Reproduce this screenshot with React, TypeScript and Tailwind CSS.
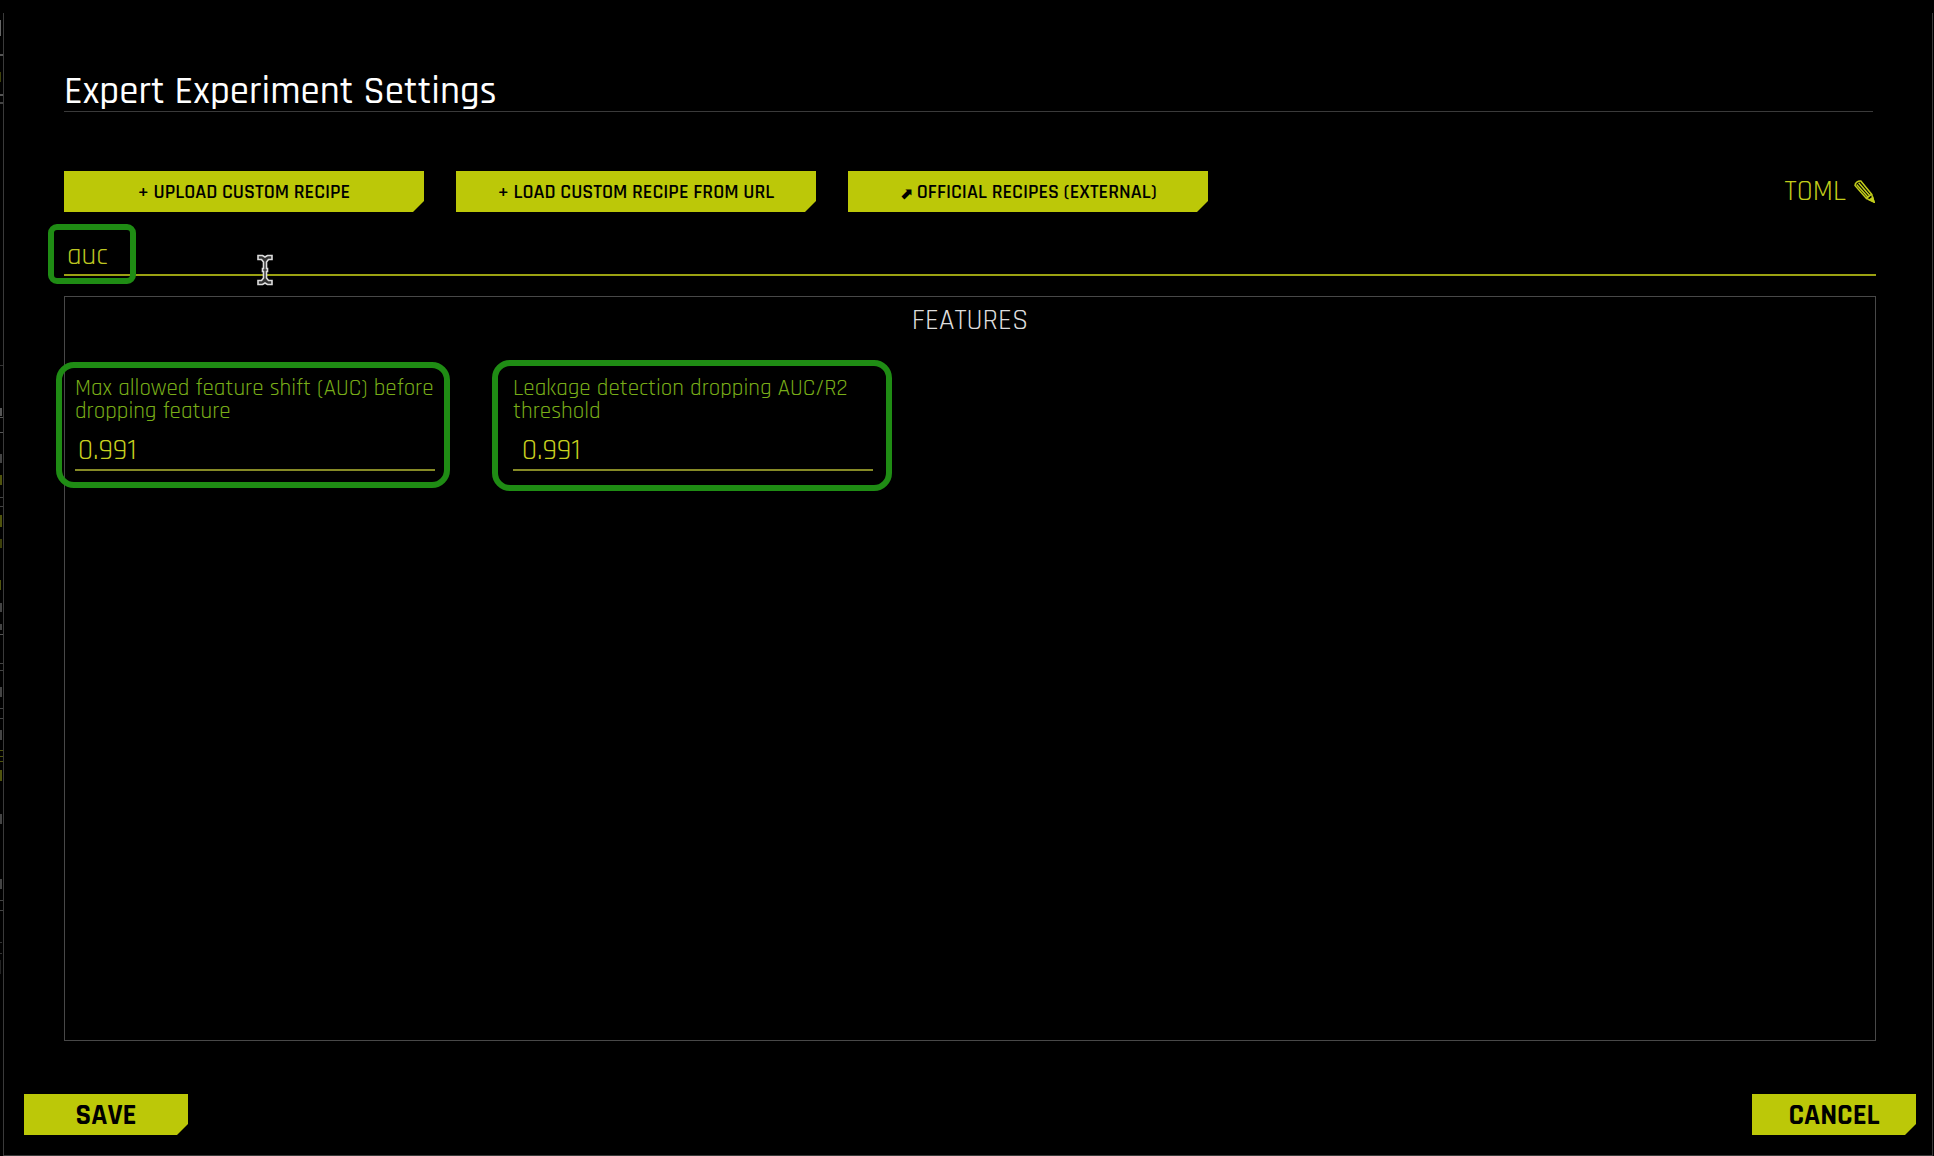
import type { ReactNode } from "react";

const FONT = "font-['Rajdhani','Roboto_Condensed',sans-serif]";
const NOTCH = "[clip-path:polygon(0_0,100%_0,100%_calc(100%-11px),calc(100%-11px)_100%,0_100%)]";

function RecipeButton({ children }: { children: ReactNode }) {
  return (
    <button
      type="button"
      className={`flex h-[41px] w-[360px] items-center justify-center gap-1 bg-[#bcc808] text-[20px] leading-6 font-semibold text-black ${NOTCH}`}
    >
      {children}
    </button>
  );
}

function FooterButton({ children }: { children: ReactNode }) {
  return (
    <button
      type="button"
      className={`flex h-[41px] w-[164px] items-center justify-center bg-[#bcc808] pt-0.5 text-[29px] leading-8 font-bold text-black ${NOTCH}`}
    >
      {children}
    </button>
  );
}

function PencilIcon() {
  return (
    <svg aria-hidden="true" width="21" height="23" viewBox="0 0 21 23" fill="none" stroke="currentColor" strokeWidth="1.5">
      <path d="M1 5.5C1 3 4 .6 6.8 1L17.6 14.2 12.4 18.4Z" />
      <path d="M2.6 4.4 14 17.2M4.6 2.8 15.8 15.8" />
      <path d="M17.6 14.2 20 22 12.4 18.4" />
      <path d="M18.7 17.4 20 22 15.4 19.9Z" fill="currentColor" />
    </svg>
  );
}

function Setting({ id, label, inset }: { id: string; label: string; inset: string }) {
  return (
    <div className="flex w-[360px] flex-col">
      <label htmlFor={id} className="text-[23px] leading-[23px] text-[#78ad18]">
        {label}
      </label>
      <input
        id={id}
        type="text"
        defaultValue="0.991"
        className={`mt-[9px] h-[39px] w-full border-b-2 border-[#868a26] bg-transparent text-[29px] leading-8 text-[#c8d01f] outline-none ${inset}`}
      />
    </div>
  );
}

const EDGE_MARKS: [number, number, number, string][] = [
  [20, 1, 16, "#666"],
  [54, 3, 2, "#555"],
  [72, 1, 10, "#3d4009"],
  [94, 3, 2, "#555"],
  [102, 3, 2, "#444"],
  [365, 3, 1, "#333"],
  [408, 2, 8, "#555"],
  [417, 3, 1, "#555"],
  [432, 3, 1, "#555"],
  [454, 2, 9, "#444"],
  [475, 2, 10, "#50540c"],
  [497, 3, 1, "#444"],
  [506, 3, 1, "#444"],
  [515, 2, 12, "#50540c"],
  [539, 2, 9, "#3d4009"],
  [580, 1, 10, "#50540c"],
  [603, 2, 9, "#444"],
  [624, 2, 6, "#444"],
  [634, 3, 1, "#555"],
  [663, 3, 1, "#444"],
  [670, 3, 1, "#444"],
  [687, 2, 10, "#444"],
  [708, 3, 1, "#444"],
  [718, 3, 1, "#444"],
  [730, 2, 10, "#444"],
  [750, 3, 1, "#50540c"],
  [756, 3, 1, "#50540c"],
  [761, 3, 1, "#50540c"],
  [770, 2, 11, "#50540c"],
  [814, 2, 10, "#444"],
  [879, 2, 10, "#444"],
  [900, 3, 1, "#444"],
  [910, 3, 1, "#444"],
  [942, 2, 1, "#333"],
  [953, 2, 1, "#333"],
  [960, 1, 14, "#222"],
];

export default function App() {
  return (
    <div className={`relative min-h-screen bg-black pt-[13px] pr-px pl-[3px] font-normal ${FONT}`}>
      <svg aria-hidden="true" width="3" height="980" className="absolute top-0 left-0">
        {EDGE_MARKS.map(([y, w, h, fill]) => (
          <rect key={y} x={0} y={y} width={w} height={h} fill={fill} />
        ))}
      </svg>

      <main className="flex min-h-[calc(100vh-13px)] flex-col border-x border-b border-[#3a3a3a] px-5 pb-5">
        <div className="flex grow flex-col pr-9 pl-10">
          <h1 className="mr-[3px] mt-[59px] border-b border-[#3a3a3a] text-[39px] leading-[39px] font-medium text-white">
            Expert Experiment Settings
          </h1>

          <div className="mt-[59px] flex items-center gap-8">
            <RecipeButton>+ UPLOAD CUSTOM RECIPE</RecipeButton>
            <RecipeButton>+ LOAD CUSTOM RECIPE FROM URL</RecipeButton>
            <RecipeButton>
              <span className="pt-1 font-['DejaVu_Sans'] text-base leading-5">⬈</span>
              OFFICIAL RECIPES (EXTERNAL)
            </RecipeButton>
            <a href="#toml" className="ml-auto flex items-center gap-2 pr-px text-[29px] leading-8 text-[#c2cd1b]">
              TOML
              <PencilIcon />
            </a>
          </div>

          <div className="relative mt-5 flex">
            <input
              type="text"
              aria-label="Search settings"
              defaultValue="auc"
              className="h-11 w-full border-b-2 border-[#9ba112] bg-transparent pt-[5px] pl-[3px] text-[29px] leading-8 text-[#bcc621] outline-none"
            />
            <div className="pointer-events-none absolute -top-2 -left-4 h-[60px] w-[88px] rounded-[9px] border-[6px] border-[#1f8c14]" />
            <svg
              aria-hidden="true"
              width="18"
              height="32"
              viewBox="0 0 18 32"
              className="pointer-events-none absolute top-[22px] left-[192px]"
            >
              <path
                d="M2 1.5h4.5L9 3l2.500-1.500H16v4h-3.500L10.500 8v6.500h1v3h-1V24l2 2.500H16v4h-4.500L9 29l-2.500 1.500H2v-4h3.500l2-2.500v-6.500h-1v-3h1V8l-2-2.500H2z"
                fill="#333"
                stroke="#ddd"
                strokeWidth="1.6"
              />
            </svg>
          </div>

          <section className="mt-5 flex grow flex-col border border-[#484848]">
            <h2 className="h-[50px] pt-2 text-center text-[29px] leading-8 text-[#ddd]">FEATURES</h2>
            <div className="flex items-start">
              <div className="-ml-[9px] mt-[15px] h-[126px] w-[394px] rounded-[18px] border-[6px] border-[#1f8c14] pt-[9px] pl-[13px]">
                <Setting id="feature-shift" label="Max allowed feature shift (AUC) before dropping feature" inset="pl-[3px]" />
              </div>
              <div className="ml-[42px] mt-[13px] h-[131px] w-[400px] rounded-[18px] border-[6px] border-[#1f8c14] pt-[11px] pl-[15px]">
                <Setting id="leakage-threshold" label="Leakage detection dropping AUC/R2 threshold" inset="pl-[9px]" />
              </div>
            </div>
          </section>
        </div>

        <footer className="-mr-1 mt-[53px] flex justify-between">
          <FooterButton>SAVE</FooterButton>
          <FooterButton>CANCEL</FooterButton>
        </footer>
      </main>
    </div>
  );
}
